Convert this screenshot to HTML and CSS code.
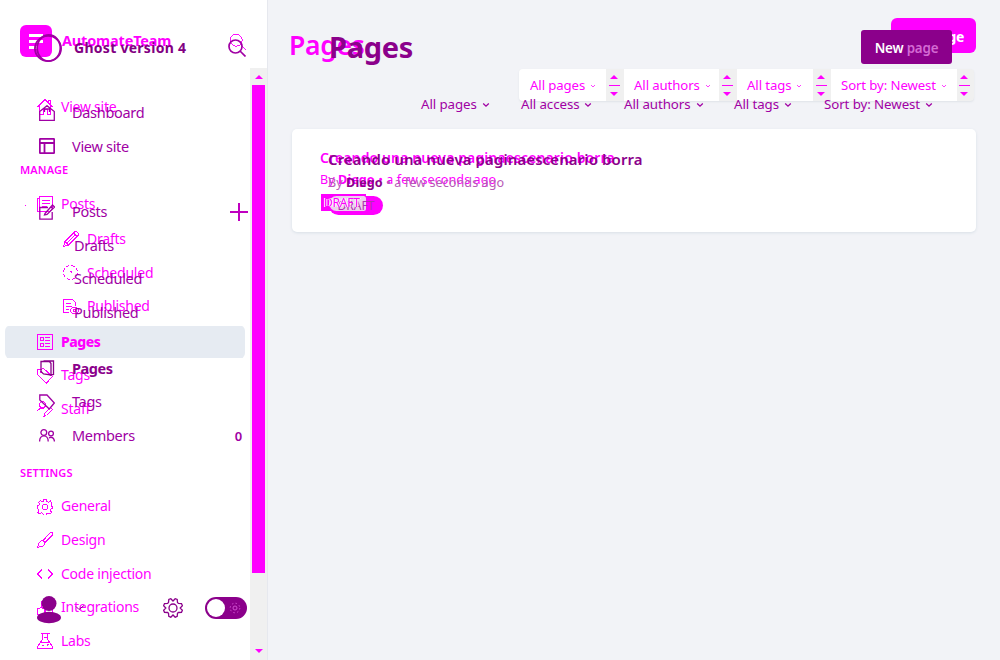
FILE: index.html
```html
<!DOCTYPE html>
<html lang="en">
<head>
<meta charset="utf-8">
<title>Pages</title>
<link rel="stylesheet" href="styles.css">
</head>
<body>
<svg width="0" height="0" class="defs">
  <defs>
    <symbol id="search" viewBox="0 0 18 18"><circle cx="7.5" cy="7.5" r="6.5"/><path d="M12 12l5.5 5.5"/></symbol>
    <symbol id="home" viewBox="0 0 16 16"><path d="M.5 8L8 .7 15.500 8M2.500 6.500v9h3.500v-5h4v5h3.500v-9M11 3.500V1.500h2.500v4"/></symbol>
    <symbol id="house" viewBox="0 0 16 16"><path d="M.7 6.500L8 .7l7.300 5.800v8.800H.7zM5.500 7V4h5v3"/></symbol>
    <symbol id="layout" viewBox="0 0 16 16"><rect x=".8" y=".8" width="14.400" height="14.400" rx="1"/><path d="M.8 5h14.400M5.500 5v10"/></symbol>
    <symbol id="docs" viewBox="0 0 16 16"><path d="M2.500.5h13v12l-2.500 2.500h-10.500zM2.500 2.500h-2v13h10M5 4.500h8M5 7.500h8M5 10.500h5"/></symbol>
    <symbol id="compose" viewBox="0 0 16 16"><path d="M9 3.500H.8v11.700h12.400V8M6 9.500L13.500 1l2 2L8 10.500l-2.500.5zM12 3l2 2"/></symbol>
    <symbol id="pencil" viewBox="0 0 16 16"><path d="M.7 15.300L2 10.500 11.500 1l2-.3 1.800 1.800-.3 2L5.500 14zM2 10.500L5.500 14M10.500 2l3.500 3.500M3.700 12.300l8.500-8.500"/></symbol>
    <symbol id="clock" viewBox="0 0 16 16"><circle cx="7.500" cy="7.500" r="7" stroke-dasharray="4 1.500"/><path d="M7 6.500h1.500v1"/></symbol>
    <symbol id="published" viewBox="0 0 16 16"><path d="M6 13.500H.5V.5h9L12 3v4M3 4.500h5M3 7.500h6M3 10.500h3"/><ellipse cx="11.500" cy="11.500" rx="4" ry="3"/><circle cx="11.500" cy="11.500" r="1"/></symbol>
    <symbol id="form" viewBox="0 0 16 16"><path d="M.5.5h15v15H.5zM3.500 3.500h3v3h-3zM3.500 9.500h3v3h-3zM8 3.500h5M8 6.500h5M8 9.500h5M8 12.500h5"/></symbol>
    <symbol id="book" viewBox="0 0 16 16"><path d="M4.500 1h10v13.500L11 15M2 1.500h8.500l1.500 2V15l-7.500-1L2 11.500z"/></symbol>
    <symbol id="tag" viewBox="0 0 16 16"><path d="M.8 1.500L7 .8 15.300 8.500 9.500 15.200.8 7z"/><circle cx="4" cy="4" r=".5"/></symbol>
    <symbol id="label" viewBox="0 0 16 16"><path d="M.8.800L8 1l7.300 8-5 6L.8 6z"/></symbol>
    <symbol id="staff" viewBox="0 0 16 16"><circle cx="5.500" cy="3.500" r="3"/><path d="M.5 10.500C1 7.500 4 7.200 7 8M7.500 12.500l6-6 2 2-6 6-2.500.8z"/></symbol>
    <symbol id="people" viewBox="0 0 16 16"><circle cx="4.800" cy="4.500" r="2.900"/><circle cx="12" cy="5.500" r="2.400"/><path d="M.6 13.500c0-7.500 8.600-7.500 8.600 0M10 9.800c3-1.500 5.400.5 5.400 3.700"/></symbol>
    <symbol id="gear" viewBox="0 0 16 16"><circle cx="8" cy="8" r="2.700"/><path d="M6.500.6h3l.5 2 1.500.6 1.900-1.100 1.600 1.700-1 2 .5 1.200 1 .5v2l-1.500.6-.5 1.300 1 1.900-1.800 1.700-1.800-1-1.400.6-.5 1.800h-2.500l-.6-1.900-1.400-.6-1.900 1-1.700-1.600 1-1.900-.5-1.300L.5 9.500V7l1.500-.6.6-1.400-1-1.700L3.300 1.700l1.900 1 1-.5z"/></symbol>
    <symbol id="cog" viewBox="0 0 20 20"><circle cx="10" cy="10" r="4"/><path d="M10 3l2.200-2.300 2 .8.300 3 .9.900 3.100.2.900 2.100L17.200 10l2.200 2.200-.9 2.100-3.100.2-.9.900-.3 3-2 .9L10 17l-2.200 2.300-2-.9-.3-3-.9-.9-3.100-.2-.9-2.100L2.800 10 .6 7.700l.9-2.100 3.100-.2.900-.9.300-3 2-.8z"/></symbol>
    <symbol id="brush" viewBox="0 0 16 16"><path d="M6 8.500L13 1l2.300-.3v2.500L8 10.500zM6 8.500L8 10.500C8 14 5 14.500.6 15.300 2 13 1 9 6 8.500z"/></symbol>
    <symbol id="code" viewBox="0 0 16 16"><path d="M5 3.500L.6 8 5 12.500M11 3.500L15.400 8 11 12.500"/></symbol>
    <symbol id="blocks" viewBox="0 0 16 16"><path d="M4.500 7V2L8 .7 11.500 2v5L8 8.500zM.5 9l3.500-1.500L7.500 9v5L4 15.300.5 14zM8.500 9L12 7.500 15.500 9v5L12 15.300 8.500 14z"/></symbol>
    <symbol id="flask" viewBox="0 0 16 16"><path d="M3.500.5h9M5.500.5v6L.6 13.500v2h14.800v-2L10.500 6.500v-6M7 4.500h3M3 9.500h10M5 12.500h1.500M9.500 11.500h2M10.500 10.500v2"/></symbol>
    <symbol id="chev" viewBox="0 0 8 8"><path d="M1.200 2.500L4 5.200 6.800 2.500"/></symbol>
  </defs>
</svg>
<div class="stage">
  <div class="layer old">
    <aside class="side">
      <div class="brand">
        <span class="logo"><i></i><i></i><i></i></span>
        <span class="site">AutomateTeam</span>
        <svg class="find"><use href="#search"/></svg>
      </div>
      <div class="scroller">
        <nav class="nav">
          <a class="row"><svg><use href="#home"/></svg><span>View site</span></a>
          <h4>MANAGE</h4>
          <a class="row dot"><svg><use href="#docs"/></svg><span>Posts</span></a>
          <div class="sub">
            <a class="row"><svg><use href="#pencil"/></svg><span>Drafts</span></a>
            <a class="row"><svg><use href="#clock"/></svg><span>Scheduled</span></a>
            <a class="row"><svg><use href="#published"/></svg><span>Published</span></a>
          </div>
          <a class="row active"><svg><use href="#form"/></svg><span>Pages</span></a>
          <a class="row"><svg><use href="#tag"/></svg><span>Tags</span></a>
          <a class="row"><svg><use href="#staff"/></svg><span>Staff</span></a>
          <h4 class="set">SETTINGS</h4>
          <a class="row"><svg><use href="#gear"/></svg><span>General</span></a>
          <a class="row"><svg><use href="#brush"/></svg><span>Design</span></a>
          <a class="row"><svg><use href="#code"/></svg><span>Code injection</span></a>
          <a class="row"><svg><use href="#blocks"/></svg><span>Integrations</span></a>
          <a class="row"><svg><use href="#flask"/></svg><span>Labs</span></a>
        </nav>
        <div class="bar"><b class="up"></b><div class="thumb"></div><b class="down"></b></div>
      </div>
    </aside>
    <main class="main">
      <header class="top"><h1>Pages</h1><span class="btn">New page</span></header>
      <div class="filters">
        <div class="pick p1"><span>All pages</span><svg><use href="#chev"/></svg></div><div class="spin"><b class="up"></b><i></i><b class="down"></b></div>
        <div class="pick p2"><span>All authors</span><svg><use href="#chev"/></svg></div><div class="spin"><b class="up"></b><i></i><b class="down"></b></div>
        <div class="pick p3"><span>All tags</span><svg><use href="#chev"/></svg></div><div class="spin"><b class="up"></b><i></i><b class="down"></b></div>
        <div class="pick p4"><span>Sort by: Newest</span><svg><use href="#chev"/></svg></div><div class="spin"><b class="up"></b><i></i><b class="down"></b></div>
      </div>
      <section class="card">
        <h3>Creando una nueva paginaescenario borra</h3>
        <p>By <b>Diego</b> • a few seconds ago</p>
        <span class="badge"><span>DRAFT</span></span>
      </section>
    </main>
  </div>
  <div class="layer new">
    <aside class="side">
      <div class="brand">
        <svg class="ring" viewBox="0 0 30 30"><ellipse cx="15" cy="15" rx="13.500" ry="13"/><ellipse cx="15.800" cy="14.500" rx="12" ry="13.500"/></svg>
        <span class="site">Ghost version 4</span>
        <svg class="find"><use href="#search"/></svg>
      </div>
      <nav class="nav">
        <a class="row"><svg><use href="#house"/></svg><span>Dashboard</span></a>
        <a class="row"><svg class="heavy"><use href="#layout"/></svg><span>View site</span></a>
        <a class="row posts"><svg><use href="#compose"/></svg><span>Posts</span><i class="plus"></i></a>
        <div class="sub">
          <a class="row"><span>Drafts</span></a>
          <a class="row"><span>Scheduled</span></a>
          <a class="row"><span>Published</span></a>
        </div>
        <a class="row active"><svg><use href="#book"/></svg><span>Pages</span></a>
        <a class="row"><svg><use href="#label"/></svg><span>Tags</span></a>
        <a class="row"><svg><use href="#people"/></svg><span>Members</span><em>0</em></a>
      </nav>
      <footer class="foot">
        <svg class="user" viewBox="0 0 24 28"><circle cx="12" cy="7.500" r="7.500"/><ellipse cx="12" cy="21.500" rx="12" ry="5.800"/></svg>
        <svg class="caret" viewBox="0 0 10 8"><path d="M1 2.500l3 3 5-4"/></svg>
        <svg class="cog"><use href="#cog"/></svg>
        <span class="toggle"><i></i><svg viewBox="0 0 12 12"><circle cx="6" cy="6" r="2"/><circle cx="6" cy="6" r="4.800" stroke-dasharray="1.500 2.270"/></svg></span>
      </footer>
    </aside>
    <main class="main">
      <header class="top"><h1>Pages</h1><span class="btn">New <span>page</span></span></header>
      <div class="filters">
        <div class="pick p1"><span>All pages</span><svg><use href="#chev"/></svg></div>
        <div class="pick p2"><span>All access</span><svg><use href="#chev"/></svg></div>
        <div class="pick p3"><span>All authors</span><svg><use href="#chev"/></svg></div>
        <div class="pick p4"><span>All tags</span><svg><use href="#chev"/></svg></div>
        <div class="pick p5"><span>Sort by: Newest</span><svg><use href="#chev"/></svg></div>
      </div>
      <section class="card">
        <h3>Creando una nueva paginaescenario borra</h3>
        <p>By <b>Diego</b> • <span>a few seconds ago</span></p>
        <span class="badge"><span>DRAFT</span></span>
      </section>
    </main>
  </div>
</div>
</body>
</html>
```
FILE: styles.css
```css
* { box-sizing: border-box; }
body { margin: 0; background: #f2f3f7; font-family: "Noto Sans", "Open Sans", sans-serif; overflow: hidden; }
h1, h3, h4, p { margin: 0; white-space: nowrap; }
i, em { font-style: normal; }
.defs { position: absolute; }
svg { fill: none; stroke: currentColor; flex: none; overflow: visible; }

.stage { display: grid; width: 1000px; height: 660px; overflow: hidden; }
.layer { grid-area: 1 / 1; display: flex; min-width: 0; height: 660px; }
.old { color: #f0f; }
.new { color: #a000a4; z-index: 1; }
.side { width: 268px; flex: none; display: flex; flex-direction: column; }
.main { flex: 1; min-width: 0; }
.brand, .row, .top, .filters, .pick, .foot { display: flex; align-items: center; white-space: nowrap; }
.row svg { width: 16px; height: 16px; }
.row span { margin-top: -1.500px; }
.up, .down { width: 0; height: 0; border: 4px solid transparent; }
.up { border-top: 0; border-bottom-color: #f0f; }
.down { border-bottom: 0; border-top-color: #f0f; }

/* first layer */
.old svg { shape-rendering: crispEdges; }
.old .side { background: #fff; border-right: 1px solid #e6e8ee; }
.old .brand { height: 68px; padding: 14px 21px 0 20px; }
.logo { width: 32px; height: 32px; border-radius: 6px; background: #f0f; display: flex; flex-direction: column; justify-content: center; gap: 3px; padding-left: 9px; }
.logo i { height: 3px; width: 14px; background: #fff; }
.logo i:last-child { width: 9px; }
.old .site { margin: -2px 0 0 10px; font-size: 14.500px; font-weight: 700; letter-spacing: -0.180px; flex: 1; }
.old .find { width: 17px; height: 17px; }
.scroller { display: flex; height: 592px; }
.old .nav { width: 250px; padding: 22px 5px 0; overflow: hidden; font-size: 14px; letter-spacing: -0.230px; }
.old .row { height: 33.600px; padding-left: 32px; gap: 8px; }
.old .nav h4 { margin-top: 30px; height: 34px; line-height: 32px; padding-left: 15px; font-size: 11px; font-weight: 600; letter-spacing: 0.100px; }
.old .nav .set { line-height: 33px; }
.old .dot { position: relative; }
.old .dot::before { content: ""; position: absolute; left: 20px; top: 17px; width: 1px; height: 1px; background: #f0f; }
.old .sub { padding: 1.500px 0 1.700px 26px; }
.old .active { font-weight: 800; letter-spacing: -0.500px; background: linear-gradient(#e6ebf2, #e6ebf2) center / 100% 32px no-repeat; border-radius: 6px; }
.old .active span { margin-top: 0; }
.bar { width: 17px; background: #f0f0f0; display: flex; flex-direction: column; align-items: center; padding-top: 7px; }
.thumb { width: 13px; height: 488px; margin-top: 6px; background: #f0f; }
.bar .down { margin-top: 76px; }
.old .top { padding: 18px 24px 0 22px; height: 54px; justify-content: space-between; }
.old h1 { font-size: 26.500px; font-weight: 600; line-height: 34px; margin: 17px 0 0 -1px; letter-spacing: -0.300px; }
.old .btn { width: 85px; height: 35px; margin-top: -1px; border-radius: 6px; background: #f0f; color: #fff; font-size: 14px; font-weight: 700; line-height: 37px; text-align: right; padding-right: 12px; letter-spacing: -0.300px; }
.old .filters { margin: 15px 26px 0 251px; height: 32px; background: #f0f0f0; border-radius: 4px; font-size: 13.200px; letter-spacing: -0.100px; box-shadow: 0 1px 2px #dfe3e8; }
.old .pick { height: 32px; background: #fff; padding-left: 11px; gap: 5px; }
.pick svg { width: 8px; height: 8px; margin-top: 1px; }
.old .pick svg { width: 6px; height: 6px; }
.old .p1 { width: 87px; border-radius: 4px 0 0 4px; }
.old .p2 { width: 95px; padding-left: 10px; }
.old .p3 { width: 76px; padding-left: 10px; }
.old .p4 { width: 126px; padding-left: 10px; }
.spin { width: 18px; display: flex; flex-direction: column; align-items: center; gap: 6px; padding-right: 2px; }
.spin:last-child { width: 16px; }
.spin i { width: 11px; height: 1px; background: #f0f; }
.old .card { margin: 28px 24px 0; height: 103px; background: #fff; border-radius: 5px; box-shadow: 0 1px 3px #d8dfe6; padding: 18px 28px; }
.old h3 { font-size: 14px; line-height: 21px; font-weight: 600; letter-spacing: 0.120px; }
.old p { font-size: 12.600px; line-height: 23px; letter-spacing: 0.070px; }
.old .badge { display: block; width: 45px; height: 17px; margin: 3px 0 0 1px; background: #f0f; font-size: 12px; line-height: 18px; padding-left: 3px; letter-spacing: -0.200px; }
.old .badge span { position: relative; z-index: 2; text-shadow: 1px 0 #fff, -1px 0 #fff; }

/* second layer */
.new .brand { height: 62px; padding: 34px 22px 0 33px; }
.ring { width: 30px; height: 29px; stroke-width: 1.900; }
.new .site { margin: -1px 0 0 11px; font-size: 14px; font-weight: 700; letter-spacing: 0.280px; flex: 1; color: #820082; }
.new .find { width: 18px; height: 18px; stroke-width: 1.700; }
.new .nav { padding: 34px 26px 0 39px; font-size: 14.500px; height: 531px; letter-spacing: -0.300px; }
.new .row { height: 33.600px; gap: 17px; }
.new .row svg { stroke-width: 1.300; }
.new .row .heavy { stroke-width: 1.800; }
.new .posts { margin-top: 32px; }
.plus { width: 18px; height: 18px; margin: 0 -6px 0 auto; background: linear-gradient(#c000c0, #c000c0) center / 2px 100% no-repeat, linear-gradient(#c000c0, #c000c0) center / 100% 2px no-repeat; }
.new .sub { padding-left: 35px; }
.new .nav .active { font-weight: 700; margin-top: 22px; color: #8b008b; letter-spacing: -0.450px; }
.new .active span { margin-top: 0; }
.new em { margin-left: auto; font-size: 13px; font-weight: 600; }
.foot { padding-left: 37px; height: 30px; color: #8b008b; }
.user { width: 24px; height: 28px; margin-top: 4px; fill: currentColor; stroke: none; }
.caret { width: 10px; height: 8px; margin-left: 14px; }
.cog { width: 20px; height: 20px; margin-left: 78px; stroke-width: 1.300; }
.toggle { width: 42px; height: 22px; margin-left: 22px; border-radius: 11px; background: #8b008b; display: flex; align-items: center; padding: 0 6px 0 2px; justify-content: space-between; }
.toggle i { width: 18px; height: 18px; border-radius: 50%; background: #fff; }
.toggle svg { width: 12px; height: 12px; stroke: #d050d0; }
.new .top { height: 64px; padding: 30px 48px 0 61px; justify-content: space-between; }
.new h1 { font-size: 29px; font-weight: 700; line-height: 34px; color: #8b008b; letter-spacing: -0.300px; }
.new .btn { width: 91px; height: 34px; background: #8b008b; border-radius: 3px; color: #fff; text-align: center; font-size: 13.400px; font-weight: 600; line-height: 36px; letter-spacing: -0.200px; }
.new .btn span { color: #d36bd3; }
.new .filters { height: 20px; margin-top: 30px; padding-left: 153px; font-size: 13.300px; letter-spacing: -0.080px; }
.new .pick { gap: 5px; }
.new .p1 { width: 100px; }
.new .p2 { width: 103px; }
.new .p3 { width: 110px; }
.new .p4 { width: 90px; }
.new .pick svg { stroke-width: 1.300; }
.new .card { padding: 34px 0 0 60px; }
.new h3 { font-size: 15px; font-weight: 600; line-height: 22px; color: #8b008b; letter-spacing: 0.100px; }
.new p { font-size: 12.600px; line-height: 25px; color: #b85ab8; letter-spacing: 0.070px; }
.new p b { color: #8b008b; }
.new .badge { position: relative; display: block; width: 54px; height: 19px; margin: 1px 0 0 1px; border-radius: 10px; background: #f0f; color: #b030b0; font-size: 12px; line-height: 20px; text-align: center; }
.new .badge::before { content: ""; position: absolute; inset: 0 17px 4px 0; background: #ecd2ec; border-radius: 9px 3px 3px 9px; }
.new .badge span { position: relative; }
```
